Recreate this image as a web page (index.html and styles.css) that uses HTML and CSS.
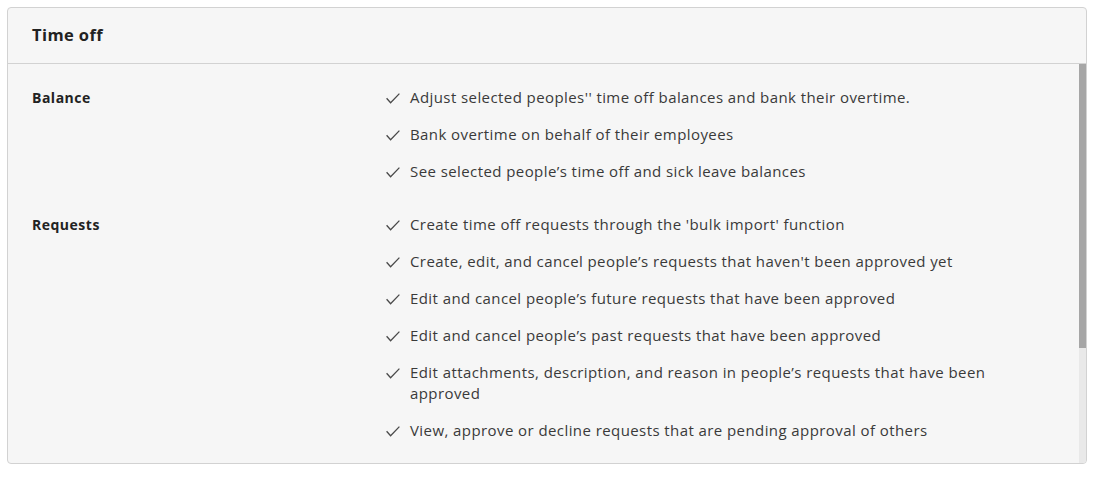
FILE: index.html
```html
<!DOCTYPE html>
<html>
<head>
<meta charset="utf-8">
<link rel="stylesheet" href="styles.css">
</head>
<body>
<div class="card">
  <div class="card-header">
    <h2 class="card-title">Time off</h2>
  </div>
  <div class="card-main">
    <div class="card-body">
      <div class="section">
        <div class="section-label">Balance</div>
        <ul class="perm-list">
          <li class="perm"><svg class="check" viewBox="0 0 14 11"><path d="M0.6 5.2 L4.6 9.8 L13.4 0.6"/></svg><span>Adjust selected peoples'' time off balances and bank their overtime.</span></li>
          <li class="perm"><svg class="check" viewBox="0 0 14 11"><path d="M0.6 5.2 L4.6 9.8 L13.4 0.6"/></svg><span>Bank overtime on behalf of their employees</span></li>
          <li class="perm"><svg class="check" viewBox="0 0 14 11"><path d="M0.6 5.2 L4.6 9.8 L13.4 0.6"/></svg><span>See selected people’s time off and sick leave balances</span></li>
        </ul>
      </div>
      <div class="section">
        <div class="section-label">Requests</div>
        <ul class="perm-list">
          <li class="perm"><svg class="check" viewBox="0 0 14 11"><path d="M0.6 5.2 L4.6 9.8 L13.4 0.6"/></svg><span>Create time off requests through the 'bulk import' function</span></li>
          <li class="perm"><svg class="check" viewBox="0 0 14 11"><path d="M0.6 5.2 L4.6 9.8 L13.4 0.6"/></svg><span>Create, edit, and cancel people’s requests that haven't been approved yet</span></li>
          <li class="perm"><svg class="check" viewBox="0 0 14 11"><path d="M0.6 5.2 L4.6 9.8 L13.4 0.6"/></svg><span>Edit and cancel people’s future requests that have been approved</span></li>
          <li class="perm"><svg class="check" viewBox="0 0 14 11"><path d="M0.6 5.2 L4.6 9.8 L13.4 0.6"/></svg><span>Edit and cancel people’s past requests that have been approved</span></li>
          <li class="perm"><svg class="check" viewBox="0 0 14 11"><path d="M0.6 5.2 L4.6 9.8 L13.4 0.6"/></svg><span>Edit attachments, description, and reason in people’s requests that have been approved</span></li>
          <li class="perm"><svg class="check" viewBox="0 0 14 11"><path d="M0.6 5.2 L4.6 9.8 L13.4 0.6"/></svg><span>View, approve or decline requests that are pending approval of others</span></li>
        </ul>
      </div>
    </div>
    <div class="scrollbar"><div class="scrollbar-thumb"></div></div>
  </div>
</div>
</body>
</html>
```

FILE: styles.css
```css
html, body {
  margin: 0;
  padding: 0;
  background: #ffffff;
}
body {
  padding: 7px 8px 0 7px;
  font-family: "Open Sans", "Liberation Sans", sans-serif;
  color: #333333;
}
.card {
  width: 1078px;
  height: 455px;
  border: 1px solid #d2d2d2;
  border-radius: 4px;
  background: #f6f6f6;
  display: flex;
  flex-direction: column;
  overflow: hidden;
}
.card-header {
  height: 56px;
  flex: none;
  display: flex;
  align-items: center;
  padding: 0 24px 3px 24px;
  box-sizing: border-box;
  border-bottom: 1px solid #d2d2d2;
}
.card-title {
  margin: 0;
  font-size: 16.5px;
  font-weight: 700;
  letter-spacing: 0.4px;
  color: #222222;
}
.card-main {
  flex: 1;
  position: relative;
  overflow: hidden;
}
.card-body {
  height: 100%;
  box-sizing: border-box;
  overflow: hidden;
  padding: 23px 31px 0 24px;
}
.scrollbar {
  position: absolute;
  top: 0;
  right: 0;
  bottom: 0;
  width: 7px;
  background: #e9e9e9;
}
.scrollbar-thumb {
  height: 284px;
  background: #a6a6a6;
}
.section {
  display: flex;
  margin-bottom: 32px;
}
.section-label {
  width: 354px;
  flex: none;
  font-size: 14px;
  font-weight: 700;
  letter-spacing: 0.5px;
  line-height: 21px;
  color: #222222;
}
.perm-list {
  list-style: none;
  margin: 0;
  padding: 0;
  width: 610px;
  display: flex;
  flex-direction: column;
  gap: 16px;
}
.perm {
  display: flex;
  gap: 10px;
  font-size: 15px;
  letter-spacing: 0.42px;
  line-height: 21px;
  color: #3a3a3a;
}
.check {
  width: 14px;
  height: 11px;
  flex: none;
  margin-top: 6px;
  fill: none;
  stroke: #4a4a4a;
  stroke-width: 1.3;
}
```
